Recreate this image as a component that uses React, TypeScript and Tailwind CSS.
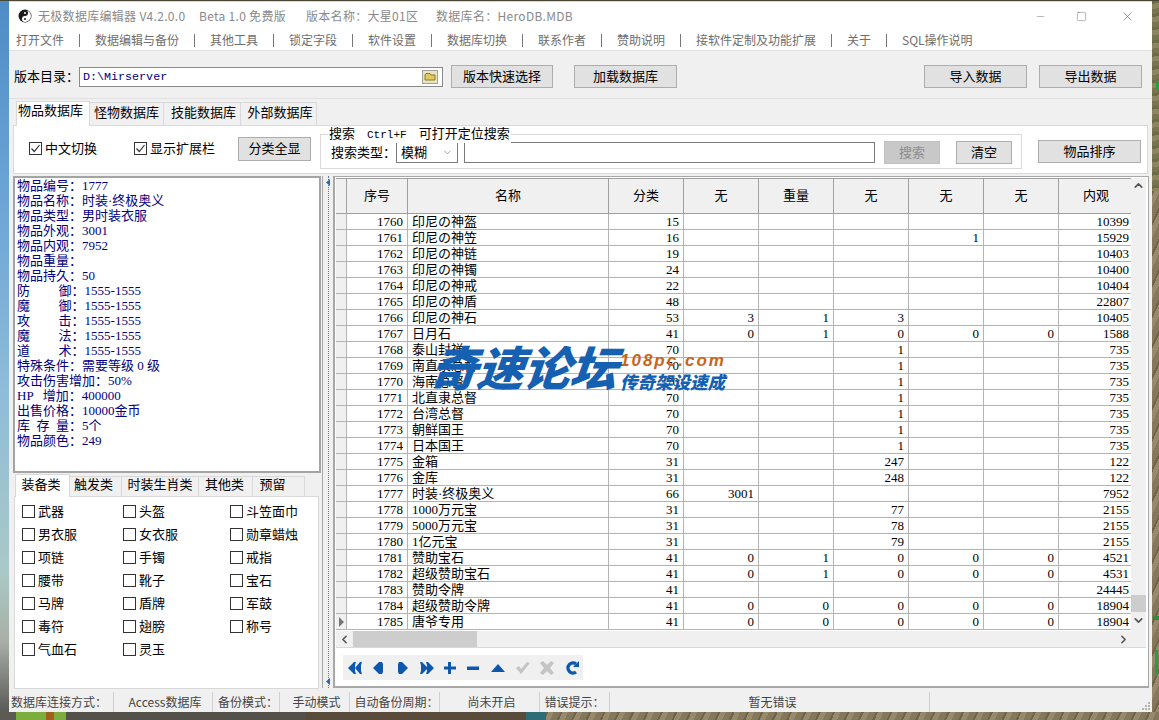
import type { ReactNode } from 'react'
import { ChevronDown, ChevronLeft, ChevronRight, ChevronUp, Minus, Square, X } from 'lucide-react'

const UI_FONT = "font-['Liberation_Serif','Noto_Sans_CJK_SC',serif] text-[13px]"
const SANS_FONT = "font-['Noto_Sans_CJK_SC',sans-serif] text-[12px]"

const menuItems = [
  ['打开文件', 'w-[79px]'],
  ['数据编辑与备份', 'w-[115px]'],
  ['其他工具', 'w-[79px]'],
  ['锁定字段', 'w-[79px]'],
  ['软件设置', 'w-[79px]'],
  ['数据库切换', 'w-[91px]'],
  ['联系作者', 'w-[79px]'],
  ['赞助说明', 'w-[79px]'],
  ['接软件定制及功能扩展', 'w-[151px]'],
  ['关于', 'w-[55px]'],
  ['SQL操作说明', 'w-[90px]'],
]

const itemInfo = [
  '物品编号：1777',
  '物品名称：时装·终极奥义',
  '物品类型：男时装衣服',
  '物品外观：3001',
  '物品内观：7952',
  '物品重量：',
  '物品持久：50',
  '防\u2003\u2003\u2009御：1555-1555',
  '魔\u2003\u2003\u2009御：1555-1555',
  '攻\u2003\u2003\u2009击：1555-1555',
  '魔\u2003\u2003\u2009法：1555-1555',
  '道\u2003\u2003\u2009术：1555-1555',
  '特殊条件：需要等级 0 级',
  '攻击伤害增加：50%',
  'HP\u2002\u2009增加：400000',
  '出售价格：10000金币',
  '库\u2002存\u2002量：5个',
  '物品颜色：249',
]

const categories = [
  ['武器', '头盔', '斗笠面巾'],
  ['男衣服', '女衣服', '勋章蜡烛'],
  ['项链', '手镯', '戒指'],
  ['腰带', '靴子', '宝石'],
  ['马牌', '盾牌', '军鼓'],
  ['毒符', '翅膀', '称号'],
  ['气血石', '灵玉', ''],
]

// id, name, type, a, weight, c, d, e, looks
const rows: (string | number)[][] = [
  [1760, '印尼の神盔', 15, '', '', '', '', '', 10399],
  [1761, '印尼の神笠', 16, '', '', '', 1, '', 15929],
  [1762, '印尼の神链', 19, '', '', '', '', '', 10403],
  [1763, '印尼の神镯', 24, '', '', '', '', '', 10400],
  [1764, '印尼の神戒', 22, '', '', '', '', '', 10404],
  [1765, '印尼の神盾', 48, '', '', '', '', '', 22807],
  [1766, '印尼の神石', 53, 3, 1, 3, '', '', 10405],
  [1767, '日月石', 41, 0, 1, 0, 0, 0, 1588],
  [1768, '泰山封禅', 70, '', '', 1, '', '', 735],
  [1769, '南直隶总督', 70, '', '', 1, '', '', 735],
  [1770, '海南总督', 70, '', '', 1, '', '', 735],
  [1771, '北直隶总督', 70, '', '', 1, '', '', 735],
  [1772, '台湾总督', 70, '', '', 1, '', '', 735],
  [1773, '朝鲜国王', 70, '', '', 1, '', '', 735],
  [1774, '日本国王', 70, '', '', 1, '', '', 735],
  [1775, '金箱', 31, '', '', 247, '', '', 122],
  [1776, '金库', 31, '', '', 248, '', '', 122],
  [1777, '时装·终极奥义', 66, 3001, '', '', '', '', 7952],
  [1778, '1000万元宝', 31, '', '', 77, '', '', 2155],
  [1779, '5000万元宝', 31, '', '', 78, '', '', 2155],
  [1780, '1亿元宝', 31, '', '', 79, '', '', 2155],
  [1781, '赞助宝石', 41, 0, 1, 0, 0, 0, 4521],
  [1782, '超级赞助宝石', 41, 0, 1, 0, 0, 0, 4531],
  [1783, '赞助令牌', 41, '', '', '', '', '', 24445],
  [1784, '超级赞助令牌', 41, 0, 0, 0, 0, 0, 18904],
  [1785, '唐爷专用', 41, 0, 0, 0, 0, 0, 18904],
]

const GRID_COLS = 'grid grid-cols-[11px_61px_201px_75px_75px_75px_75px_75px_75px_75px] w-[798px]'

// rough stand-in for the rocky game wallpaper behind the window
const GROUND =
  'bg-[#8a7c60] bg-[repeating-linear-gradient(115deg,#6f634a_0px,#6f634a_2px,#97896c_2px,#97896c_7px,#84775b_7px,#84775b_13px)]'
const GROUND_OLIVE =
  'bg-[repeating-linear-gradient(170deg,#6d6a46_0px,#6d6a46_3px,#8c8660_3px,#8c8660_8px,#797450_8px,#797450_13px)]'

function Btn({ children, className, disabled }: { children: ReactNode; className: string; disabled?: boolean }) {
  return (
    <button
      className={`border flex items-center justify-center ${
        disabled ? 'bg-[#c8c8c8] border-[#c0c0c0] text-[#8c8c8c]' : 'bg-[#e1e1e1] border-[#adadad] text-black'
      } ${className}`}
    >
      {children}
    </button>
  )
}

function Check({ label, checked, className }: { label: string; checked?: boolean; className?: string }) {
  return (
    <label className={`flex items-center gap-[3px] ${className ?? ''}`}>
      <span className="w-[13px] h-[13px] border border-[#333] bg-white flex items-center justify-center shrink-0">
        {checked && (
          <svg width="11" height="11" viewBox="0 0 11 11" fill="none" stroke="#333" strokeWidth="1.2">
            <path d="M1.5 5.5 L4.3 8.5 L9.5 2" />
          </svg>
        )}
      </span>
      <span>{label}</span>
    </label>
  )
}

function NavIcon({ children, disabled }: { children: ReactNode; disabled?: boolean }) {
  return (
    <svg width="24" height="18" viewBox="0 0 24 18" fill={disabled ? '#c4c4c4' : '#0d58ad'} stroke="none">
      {children}
    </svg>
  )
}

function NavBar() {
  return (
    <div className="w-[240px] h-[25px] bg-[#f0f0f0] flex items-center pl-[4px]">
      <NavIcon>
        <path d="M1 9 L7 3 H9 L8 6 V12 L9 15 H7 Z" />
        <path d="M8 9 L13 3 H15 L14 6 V12 L15 15 H13 Z" />
      </NavIcon>
      <NavIcon>
        <path d="M2 9 L8 3 H11 L12 5 V13 L11 15 H8 Z" />
      </NavIcon>
      <NavIcon>
        <path d="M3 5 L4 3 H7 L13 9 L7 15 H4 L3 13 Z" />
      </NavIcon>
      <NavIcon>
        <path d="M1 3 H3 L9 9 L3 15 H1 L2 12 V6 Z" />
        <path d="M7 3 H9 L15 9 L9 15 H7 L8 12 V6 Z" />
      </NavIcon>
      <NavIcon>
        <path d="M5 3 H8 V7.5 H13 V10.5 H8 V15 H5 V10.5 H1 V7.5 H5 Z" />
      </NavIcon>
      <NavIcon>
        <rect x="0" y="7.5" width="12" height="3.5" />
      </NavIcon>
      <NavIcon>
        <path d="M0 13 L7 5 L14 13 Z" />
      </NavIcon>
      <NavIcon disabled>
        <path d="M1 9 L4 7 L6 10 L12 3 L15 4 L6 15 Z" />
      </NavIcon>
      <NavIcon disabled>
        <path d="M1 4 L4 2 L8 6 L12 2 L15 4 L11 9 L15 14 L12 16 L8 12 L4 16 L1 14 L5 9 Z" />
      </NavIcon>
      <svg width="20" height="18" viewBox="0 0 20 18" fill="none" stroke="#0d58ad" strokeWidth="3.4">
        <path d="M13 5 A 5 5 0 1 0 13 13" />
        <path d="M10 8 H16 V2 Z" fill="#0d58ad" stroke="none" />
      </svg>
    </div>
  )
}

function DataGrid() {
  return (
    <div className="flex h-[453px] mt-[1px] ml-[1px]">
      <div className="w-[795px] overflow-hidden">
        <div className={`${GRID_COLS} h-[36px] bg-[#f0f0f0] border-y border-[#a0a0a0] text-black`}>
          {['', '序号', '名称', '分类', '无', '重量', '无', '无', '无', '内观'].map((h, i) => (
            <div key={i} className="border-r border-[#a0a0a0] flex items-center justify-center">
              {h}
            </div>
          ))}
        </div>
        {rows.map((r, idx) => (
          <div key={r[0]} className={`${GRID_COLS} h-[16px] leading-[15px]`}>
            <div className="bg-[#f0f0f0] border-r border-b border-[#b4b4b4] flex items-center justify-center">
              {idx === rows.length - 1 && (
                <svg width="7" height="10" viewBox="0 0 7 10" fill="#777">
                  <path d="M1 0 L6 5 L1 10 Z" />
                </svg>
              )}
            </div>
            {r.map((v, i) => (
              <div
                key={i}
                className={`border-r border-b border-[#b4b4b4] whitespace-nowrap overflow-hidden ${
                  i === 1 ? 'pl-[4px]' : 'text-right pr-[4px]'
                }`}
              >
                {v}
              </div>
            ))}
          </div>
        ))}
      </div>
      <div className="w-[15px] bg-[#f0f0f0] flex flex-col items-center text-[#555]">
        <ChevronUp size={13} strokeWidth={3} className="mt-[1px]" />
        <div className="w-full h-[17px] bg-[#cdcdcd] mt-[403px]" />
        <ChevronDown size={13} strokeWidth={3} className="mt-[2px]" />
      </div>
    </div>
  )
}

function Watermark() {
  return (
    <div className="absolute left-[431px] top-[336px] flex items-start pointer-events-none font-['Noto_Sans_CJK_SC',sans-serif] italic">
      <span className="text-[47px] leading-[60px] font-black text-[#1560b1] -skew-x-6 tracking-[-0.5px]">奇速论坛</span>
      <div className="flex flex-col ml-[3px] mt-[16px]">
        <span className="font-['Liberation_Sans',sans-serif] text-[17px] leading-[18px] font-bold text-[#c9641c] tracking-[2px] whitespace-nowrap">
          108pc.com
        </span>
        <span className="text-[17.5px] leading-[24px] font-black text-[#1560b1] whitespace-nowrap">传奇架设速成</span>
      </div>
    </div>
  )
}

export default function App() {
  return (
    <div className={`relative w-[1159px] h-[720px] overflow-hidden flex flex-col bg-[#7b7454] ${UI_FONT} text-black`}>
      <div className="h-[1px] bg-[#4d4534]" />
      <div className="flex flex-1 min-h-0">
        <div className="w-[9px] bg-[linear-gradient(180deg,#4f8cc6_0%,#6ea6d6_30%,#8fbcd8_55%,#a9c9c8_80%,#a8b0a6_90%,#5a5a56_100%)]" />

        <div className="w-[1143px] flex flex-col bg-[#f0f0f0] border-t border-[#d8d8d8]">
          {/* title bar */}
          <div className={`h-[28px] bg-white flex items-center text-[#8a8a8a] ${SANS_FONT}`}>
            <svg width="14" height="14" viewBox="0 0 14 14" className="ml-[9px] mr-[6px]">
              <circle cx="7" cy="7" r="6.5" fill="#1c1c1c" />
              <path d="M7 1 A3 3 0 0 1 7 7 A3 3 0 0 0 7 13 A6 6 0 0 0 7 1 Z" fill="#fff" />
              <circle cx="7" cy="4" r="1" fill="#fff" />
              <circle cx="7" cy="10" r="1" fill="#1c1c1c" />
            </svg>
            <span className="w-[161px] whitespace-nowrap tracking-[0.3px]">无极数据库编辑器 V4.2.0.0</span>
            <span className="w-[107px] whitespace-nowrap tracking-[0.3px]">Beta 1.0 免费版</span>
            <span className="w-[130px] whitespace-nowrap tracking-[0.3px]">版本名称：大星01区</span>
            <span className="whitespace-nowrap tracking-[0.3px]">数据库名：HeroDB.MDB</span>
            <div className="ml-auto flex items-center text-[#666]">
              <Minus size={11} strokeWidth={1} className="mr-[30px]" />
              <Square size={11} strokeWidth={1} className="mr-[33px]" />
              <X size={15} strokeWidth={1} className="mr-[17px]" />
            </div>
          </div>

          {/* menu */}
          <div className={`h-[21px] bg-white border-b border-[#e0e0e0] flex items-center pl-[7px] text-[#6e6e6e] ${SANS_FONT}`}>
            {menuItems.map(([m, w], i) => (
              <span key={m} className={`${w} whitespace-nowrap flex items-center justify-between pr-[15px]`}>
                {m}
                {i < menuItems.length - 1 && <span className="w-[1px] h-[13px] bg-[#777]" />}
              </span>
            ))}
          </div>

          {/* version row */}
          <div className="h-[48px] border-b border-[#e0e0e0] flex items-center pl-[5px] pt-[4px]">
            <span className="w-[65px] whitespace-nowrap mt-[1px]">版本目录：</span>
            <div className="w-[364px] h-[20px] mt-[1px] bg-white border border-[#8a8a8a] flex items-center justify-between pl-[3px] pr-[4px]">
              <span className="font-['Liberation_Mono',monospace] text-[11.7px] text-[#000080] mt-[1px]">D:\Mirserver</span>
              <svg width="16" height="14" viewBox="0 0 16 14">
                <rect x="0.5" y="0.5" width="15" height="13" fill="#e8e4c0" stroke="#a0a0a0" />
                <path d="M3 10 V5 L4 3.5 H8 L9 5 H13 V10 Z" fill="#e2c860" stroke="#8c7a2c" />
              </svg>
            </div>
            <Btn className="w-[102px] h-[23px] ml-[8px]">版本快速选择</Btn>
            <Btn className="w-[103px] h-[23px] ml-[21px]">加载数据库</Btn>
            <Btn className="w-[103px] h-[23px] ml-[247px]">导入数据</Btn>
            <Btn className="w-[103px] h-[23px] ml-[12px]">导出数据</Btn>
          </div>

          {/* database tabs */}
          <div className="h-[26px] flex items-end pl-[7px]">
            <div className="w-[74px] h-[25px] bg-white border-x border-t border-[#d9d9d9] flex items-center justify-center pb-[6px] pr-[5px] -mb-[1px] z-10">物品数据库</div>
            {[
              ['怪物数据库', 'w-[74px]'],
              ['技能数据库', 'w-[77px] pl-[3px]'],
              ['外部数据库', 'w-[76px] pl-[3px]'],
            ].map(([t, w]) => (
              <div key={t} className={`${w} h-[23px] bg-[#f0f0f0] border-r border-t border-[#d9d9d9] flex items-center justify-center pb-[2px]`}>{t}</div>
            ))}
          </div>

          {/* search panel */}
          <div className="h-[49px] ml-[4px] w-[1135px] bg-white border border-[#d9d9d9] flex items-start">
            <Check label="中文切换" checked className="ml-[15px] mt-[13px] w-[105px]" />
            <Check label="显示扩展栏" checked className="mt-[13px] w-[104px]" />
            <Btn className="w-[73px] h-[24px] mt-[11px] ">分类全显</Btn>
            <div className="relative w-[702px] h-[35px] ml-[9px] mt-[8px] border border-[#d9d9d9] flex items-center pl-[10px] pt-[2px]">
              <span className="absolute left-[7px] -top-[9px] bg-white px-[1px] whitespace-nowrap leading-[15px] flex items-baseline">
                搜索
                <span className="font-['Liberation_Mono',monospace] text-[11px] ml-[12px] mr-[12px]">Ctrl+F</span>
                可打开定位搜索
              </span>
              <span className="w-[65px] whitespace-nowrap">搜索类型：</span>
              <div className="w-[62px] h-[21px] border border-[#7a7a7a] flex items-center justify-between px-[4px]">
                模糊
                <ChevronDown size={11} strokeWidth={1.2} className="text-[#555]" />
              </div>
              <div className="w-[411px] h-[21px] ml-[6px] border border-[#7a7a7a]" />
              <Btn disabled className="w-[56px] h-[23px] ml-[9px]">搜索</Btn>
              <Btn className="w-[56px] h-[23px] ml-[16px]">清空</Btn>
            </div>
            <Btn className="w-[103px] h-[23px] ml-[16px] mt-[14px]">物品排序</Btn>
          </div>

          {/* main area */}
          <div className="flex mt-[2px] pl-[4px]">
            <div className="w-[308px] flex flex-col">
              <div className="h-[297px] bg-white border-2 border-[#a4a4a4] pl-[2px] leading-[15px] text-[#000080]">
                {itemInfo.map(l => (
                  <div key={l} className="h-[15px] whitespace-pre">{l}</div>
                ))}
              </div>
              <div className="h-[22px] flex items-end pl-[2px] mt-[1px]">
                <div className="w-[55px] h-[23px] bg-white flex items-center justify-center border-t border-x border-[#d9d9d9] pb-[3px] pr-[3px] -mb-[1px] z-10">装备类</div>
                {[
                  ['触发类', 'w-[52px] pr-[4px]'],
                  ['时装生肖类', 'w-[77px]'],
                  ['其他类', 'w-[54px] pr-[2px]'],
                  ['预留', 'w-[52px] pr-[12px]'],
                ].map(([t, w]) => (
                  <div key={t} className={`${w} h-[20px] border-t border-r border-[#d9d9d9] flex items-center justify-center pb-[3px]`}>{t}</div>
                ))}
              </div>
              <div className="h-[193px] w-[305px] ml-[1px] bg-white border border-[#d9d9d9] pt-[3px] pl-[7px]">
                {categories.map(row => (
                  <div key={row[0]} className="h-[23px] grid grid-cols-[101px_107px_1fr] items-center">
                    {row.map((c, i) => (c ? <Check key={i} label={c} /> : <span key={i} />))}
                  </div>
                ))}
              </div>
            </div>

            {/* splitter */}
            <div className="w-[12px] h-[512px] ml-[1px] border-x border-[#a8a8a8] flex flex-col items-center justify-between py-[3px] relative bg-[#f0f0f0]">
              <div className="absolute left-[5px] top-0 bottom-0 border-l border-dotted border-[#5a7a9a]" />
              <svg width="5" height="7" viewBox="0 0 5 7" fill="#2a6aa8" className="relative">
                <path d="M4 0 V7 L0 3.5 Z" />
              </svg>
              <svg width="5" height="7" viewBox="0 0 5 7" fill="#2a6aa8" className="relative">
                <path d="M4 0 V7 L0 3.5 Z" />
              </svg>
            </div>

            {/* grid panel */}
            <div className="w-[815px] h-[512px] bg-white border-x border-b-2 border-t border-[#a8a8a8]">
              <DataGrid />
              <div className="h-[17px] ml-[1px] w-[810px] bg-[#f0f0f0] flex items-center justify-between pr-[16px] border-b border-[#d9d9d9] text-[#555]">
                <ChevronLeft size={13} strokeWidth={3} className="ml-[2px]" />
                <div className="w-[124px] h-full bg-[#cdcdcd] mr-auto ml-[2px]" />
                <ChevronRight size={13} strokeWidth={3} />
              </div>
              <div className="pl-[8px] pt-[7px]">
                <NavBar />
              </div>
            </div>
          </div>

          {/* status bar */}
          <div className={`h-[20px] mt-auto flex items-center text-[#444] ${SANS_FONT}`}>
            {[
              ['数据库连接方式：', 'w-[105px] pl-[2px]'],
              ['Access数据库', 'w-[99px] justify-center pl-[4px]'],
              ['备份模式：', 'w-[67px] justify-center pl-[4px]'],
              ['手动模式', 'w-[70px] justify-center pl-[4px]'],
              ['自动备份周期：', 'w-[90px] justify-center pl-[4px]'],
              ['尚未开启', 'w-[100px] justify-center pl-[4px]'],
              ['错误提示：', 'w-[70px] justify-center'],
              ['暂无错误', 'w-[320px] justify-center pl-[6px]'],
            ].map(([t, c]) => (
              <span key={t} className={`${c} h-full flex items-center whitespace-nowrap border-r border-[#d0d0d0]`}>{t}</span>
            ))}
            <svg width="9" height="9" viewBox="0 0 9 9" fill="#b4b4b4" className="ml-auto mt-[8px] mr-[1px]">
              <rect x="6" y="0" width="2" height="2" />
              <rect x="3" y="3" width="2" height="2" />
              <rect x="6" y="3" width="2" height="2" />
              <rect x="0" y="6" width="2" height="2" />
              <rect x="3" y="6" width="2" height="2" />
              <rect x="6" y="6" width="2" height="2" />
            </svg>
          </div>
        </div>

        {/* wallpaper strip on the right, with bits of green game text */}
        <div className="flex-1 flex flex-col">
          <div className={`h-[190px] ${GROUND_OLIVE} pt-[80px]`}>
            <div className="w-[3px] h-[8px] ml-[4px] bg-[#2f9a3c]" />
          </div>
          <div className={`flex-1 ${GROUND} pt-[425px]`}>
            <div className="h-[4px] ml-[1px] bg-[#2f8a34]" />
            <div className="h-[26px] w-[3px] ml-[3px] mt-[30px] bg-[#2f9a3c]" />
          </div>
        </div>
      </div>
      <div className="h-[8px] flex shrink-0">
        <div className="w-[16px] bg-[#5c5a52]" />
        <div className="w-[30px] bg-[#7cae3e]" />
        <div className="w-[8px] bg-[#a0601c]" />
        <div className="w-[12px] bg-[#7cae3e]" />
        <div className="w-[240px] bg-[#54504a]" />
        <div className="w-[220px] bg-[#5a4c3a] " />
        <div className="w-[20px] bg-[#2e6c78]" />
        <div className={`flex-1 ${GROUND}`} />
      </div>
      <Watermark />
    </div>
  )
}
